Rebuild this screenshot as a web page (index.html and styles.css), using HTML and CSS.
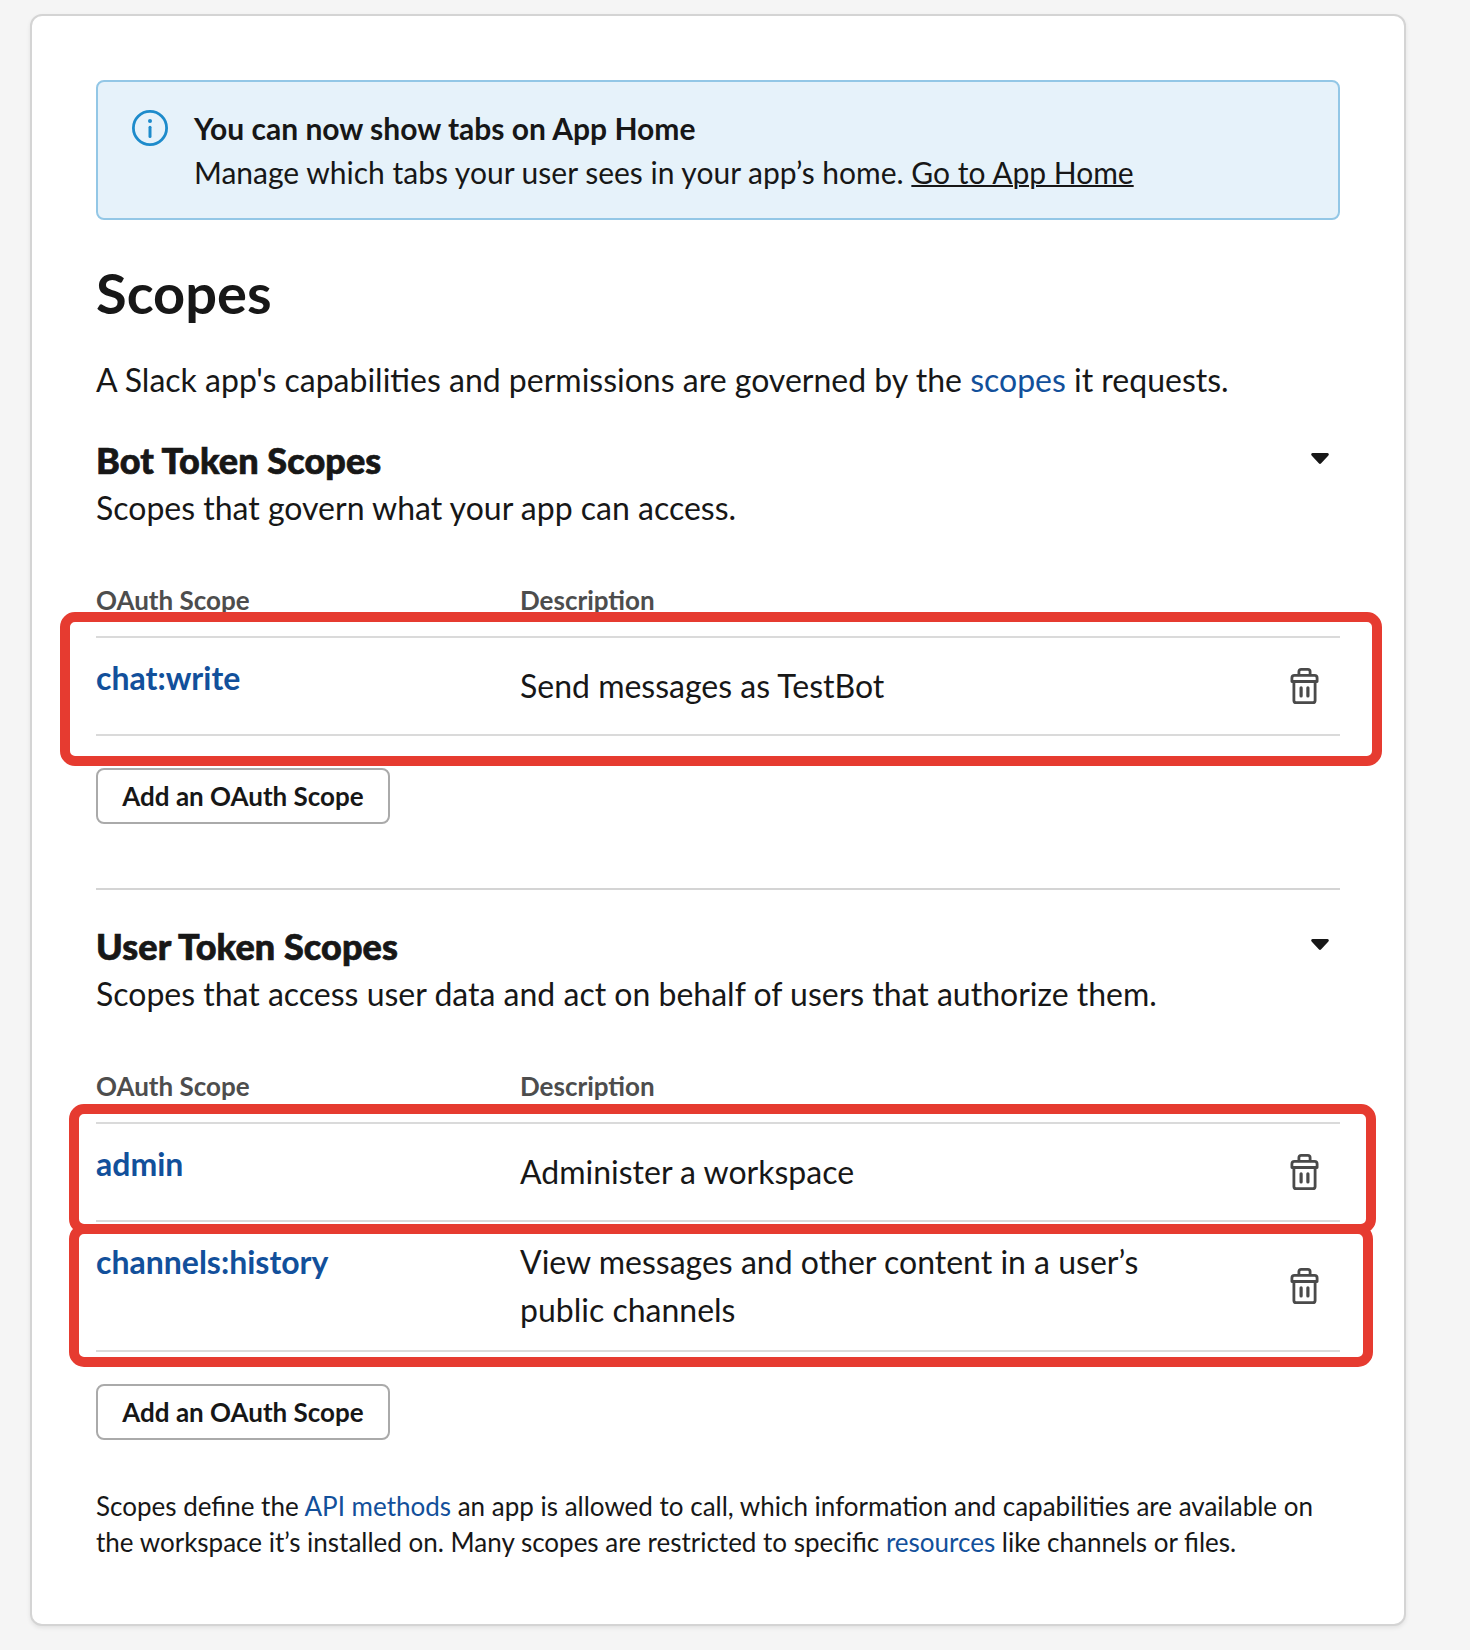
FILE: index.html
```html
<!DOCTYPE html>
<html lang="en">
<head>
<meta charset="utf-8">
<title>Scopes</title>
<link rel="stylesheet" href="styles.css">
</head>
<body>
<svg class="sprite" aria-hidden="true">
  <symbol id="trash" viewBox="0 0 30 38">
    <g fill="none" stroke="currentColor" stroke-width="2.8" stroke-linejoin="round" stroke-linecap="round">
      <path d="M8.9 7.8V4.7Q8.9 2.4 11.2 2.4H17.8Q20.1 2.4 20.1 4.7V7.8"/>
      <path d="M1.9 14.5V11Q1.9 8.4 4.5 8.4H24.5Q27.1 8.4 27.1 11V14.5Z"/>
      <path d="M3.9 14.5V33.4Q3.9 35.6 6.1 35.6H22.9Q25.1 35.6 25.1 33.4V14.5"/>
      <path stroke-width="3.2" d="M11.1 20.8V29M17.9 20.8V29"/>
    </g>
  </symbol>
  <symbol id="caret" viewBox="0 0 18 12">
    <path fill="currentColor" d="M1.5 0H16.5Q18.6.7 17.4 2.5L10.2 10.3Q9 11.6 7.8 10.3L.6 2.5Q-.6.7 1.5 0Z"/>
  </symbol>
</svg>
<main class="card">
  <div class="alert">
    <svg class="alert-icon" viewBox="0 0 36 36"><circle cx="18" cy="18" r="16.6" fill="none" stroke="currentColor" stroke-width="2.8"/><circle cx="18" cy="11" r="2" fill="currentColor"/><path d="M18 17.2V26.4" stroke="currentColor" stroke-width="3" stroke-linecap="round"/></svg>
    <div>
      <div class="alert-title">You can now show tabs on App Home</div>
      <div>Manage which tabs your user sees in your app’s home. <a class="alert-link">Go to App Home</a></div>
    </div>
  </div>
  <h2 class="title">Scopes</h2>
  <p class="intro">A Slack app's capabilities and permissions are governed by the <a class="link">scopes</a> it requests.</p>

  <section class="group">
    <div class="group-head"><h3 class="group-title">Bot Token Scopes</h3><svg class="caret"><use href="#caret"/></svg></div>
    <p class="group-text">Scopes that govern what your app can access.</p>
    <div class="table-head"><span>OAuth Scope</span><span>Description</span></div>
    <div class="row">
      <a class="scope">chat:write</a><span class="desc">Send messages as TestBot</span><svg class="trash"><use href="#trash"/></svg>
      <i class="mark mark-chat"></i>
    </div>
    <button class="add">Add an OAuth Scope</button>
  </section>

  <section class="group group-user">
    <div class="group-head"><h3 class="group-title">User Token Scopes</h3><svg class="caret"><use href="#caret"/></svg></div>
    <p class="group-text">Scopes that access user data and act on behalf of users that authorize them.</p>
    <div class="table-head"><span>OAuth Scope</span><span>Description</span></div>
    <div class="row">
      <a class="scope">admin</a><span class="desc">Administer a workspace</span><svg class="trash"><use href="#trash"/></svg>
      <i class="mark mark-admin"></i>
    </div>
    <div class="row">
      <a class="scope">channels:history</a><span class="desc">View messages and other content in a user’s public channels</span><svg class="trash"><use href="#trash"/></svg>
      <i class="mark mark-history"></i>
    </div>
    <button class="add">Add an OAuth Scope</button>
  </section>

  <p class="footnote">Scopes define the <a class="link">API methods</a> an app is allowed to call, which information and capabilities are available on the workspace it’s installed on. Many scopes are restricted to specific <a class="link">resources</a> like channels or files.</p>
</main>
</body>
</html>
```
FILE: styles.css
```css
* { box-sizing: border-box; }
body {
  margin: 0;
  padding: 14px 64px 24px 30px;
  background: #f5f5f5;
  color: #171717;
  font: 32px/48px Lato, Carlito, sans-serif;
}
h2, h3, p { margin: 0; }
.sprite { display: none; }
.card {
  height: 1612px;
  padding: 64px;
  background: #fff;
  border: 2px solid #d4d4d4;
  border-radius: 12px;
  box-shadow: 0 2px 4px rgba(0, 0, 0, .08);
}
.alert {
  display: flex;
  gap: 26px;
  height: 140px;
  padding: 24px 33px 20px 34px;
  background: #e6f2fa;
  border: 2px solid #93c7e6;
  border-radius: 8px;
  font-size: 30px;
  line-height: 44px;
}
.alert-icon { width: 36px; height: 36px; margin-top: 4px; color: #1d8bcb; }
.alert-title { font-weight: 700; }
.alert-link { text-decoration: underline; text-decoration-thickness: 2px; }
.title { margin-top: 39px; font-size: 56px; line-height: 68px; font-weight: 700; }
.intro { margin-top: 29px; }
.link { color: #12509b; }
.group { margin-top: 33px; }
.group-user { margin-top: 64px; padding-top: 33px; border-top: 2px solid #d4d4d4; }
.group-head { display: flex; justify-content: space-between; padding-right: 11px; }
.group-title { font-family: "Lato Black", Lato, Carlito, sans-serif; font-size: 36px; line-height: 46px; font-weight: 900; letter-spacing: .1px; -webkit-text-stroke: .7px #171717; }
.group-text { margin-top: 1px; }
.caret { width: 18px; height: 12px; margin-top: 16px; }
.table-head, .row { display: grid; grid-template-columns: 424px 640px 1fr; }
.table-head {
  margin-top: 48px;
  padding-bottom: 16px;
  border-bottom: 2px solid #dadada;
  color: #4d4d4d;
  font-size: 26px;
  line-height: 40px;
  font-weight: 700;
}
.row {
  position: relative;
  min-height: 98px;
  padding: 16px 0;
  border-bottom: 2px solid #dadada;
}
.scope { color: #12509b; font-weight: 700; }
.desc { align-self: center; }
.trash { width: 30px; height: 38px; margin-right: 20px; align-self: center; justify-self: end; color: #4a4a4a; }
.mark { position: absolute; border: 10px solid #e63b30; border-radius: 15px; }
.mark-chat { left: -36px; right: -42px; top: -26px; bottom: -32px; }
.mark-admin { left: -27px; right: -36px; top: -20px; bottom: -14px; }
.mark-history { left: -27px; right: -33px; top: 2px; bottom: -17px; }
.add {
  display: block;
  width: 294px;
  height: 56px;
  margin-top: 32px;
  padding: 0;
  background: #fff;
  border: 2px solid #aaa;
  border-radius: 8px;
  color: #171717;
  font: 700 26px/52px Lato, Carlito, sans-serif;
}
.footnote { margin-top: 48px; font-size: 26px; line-height: 36px; }
```
